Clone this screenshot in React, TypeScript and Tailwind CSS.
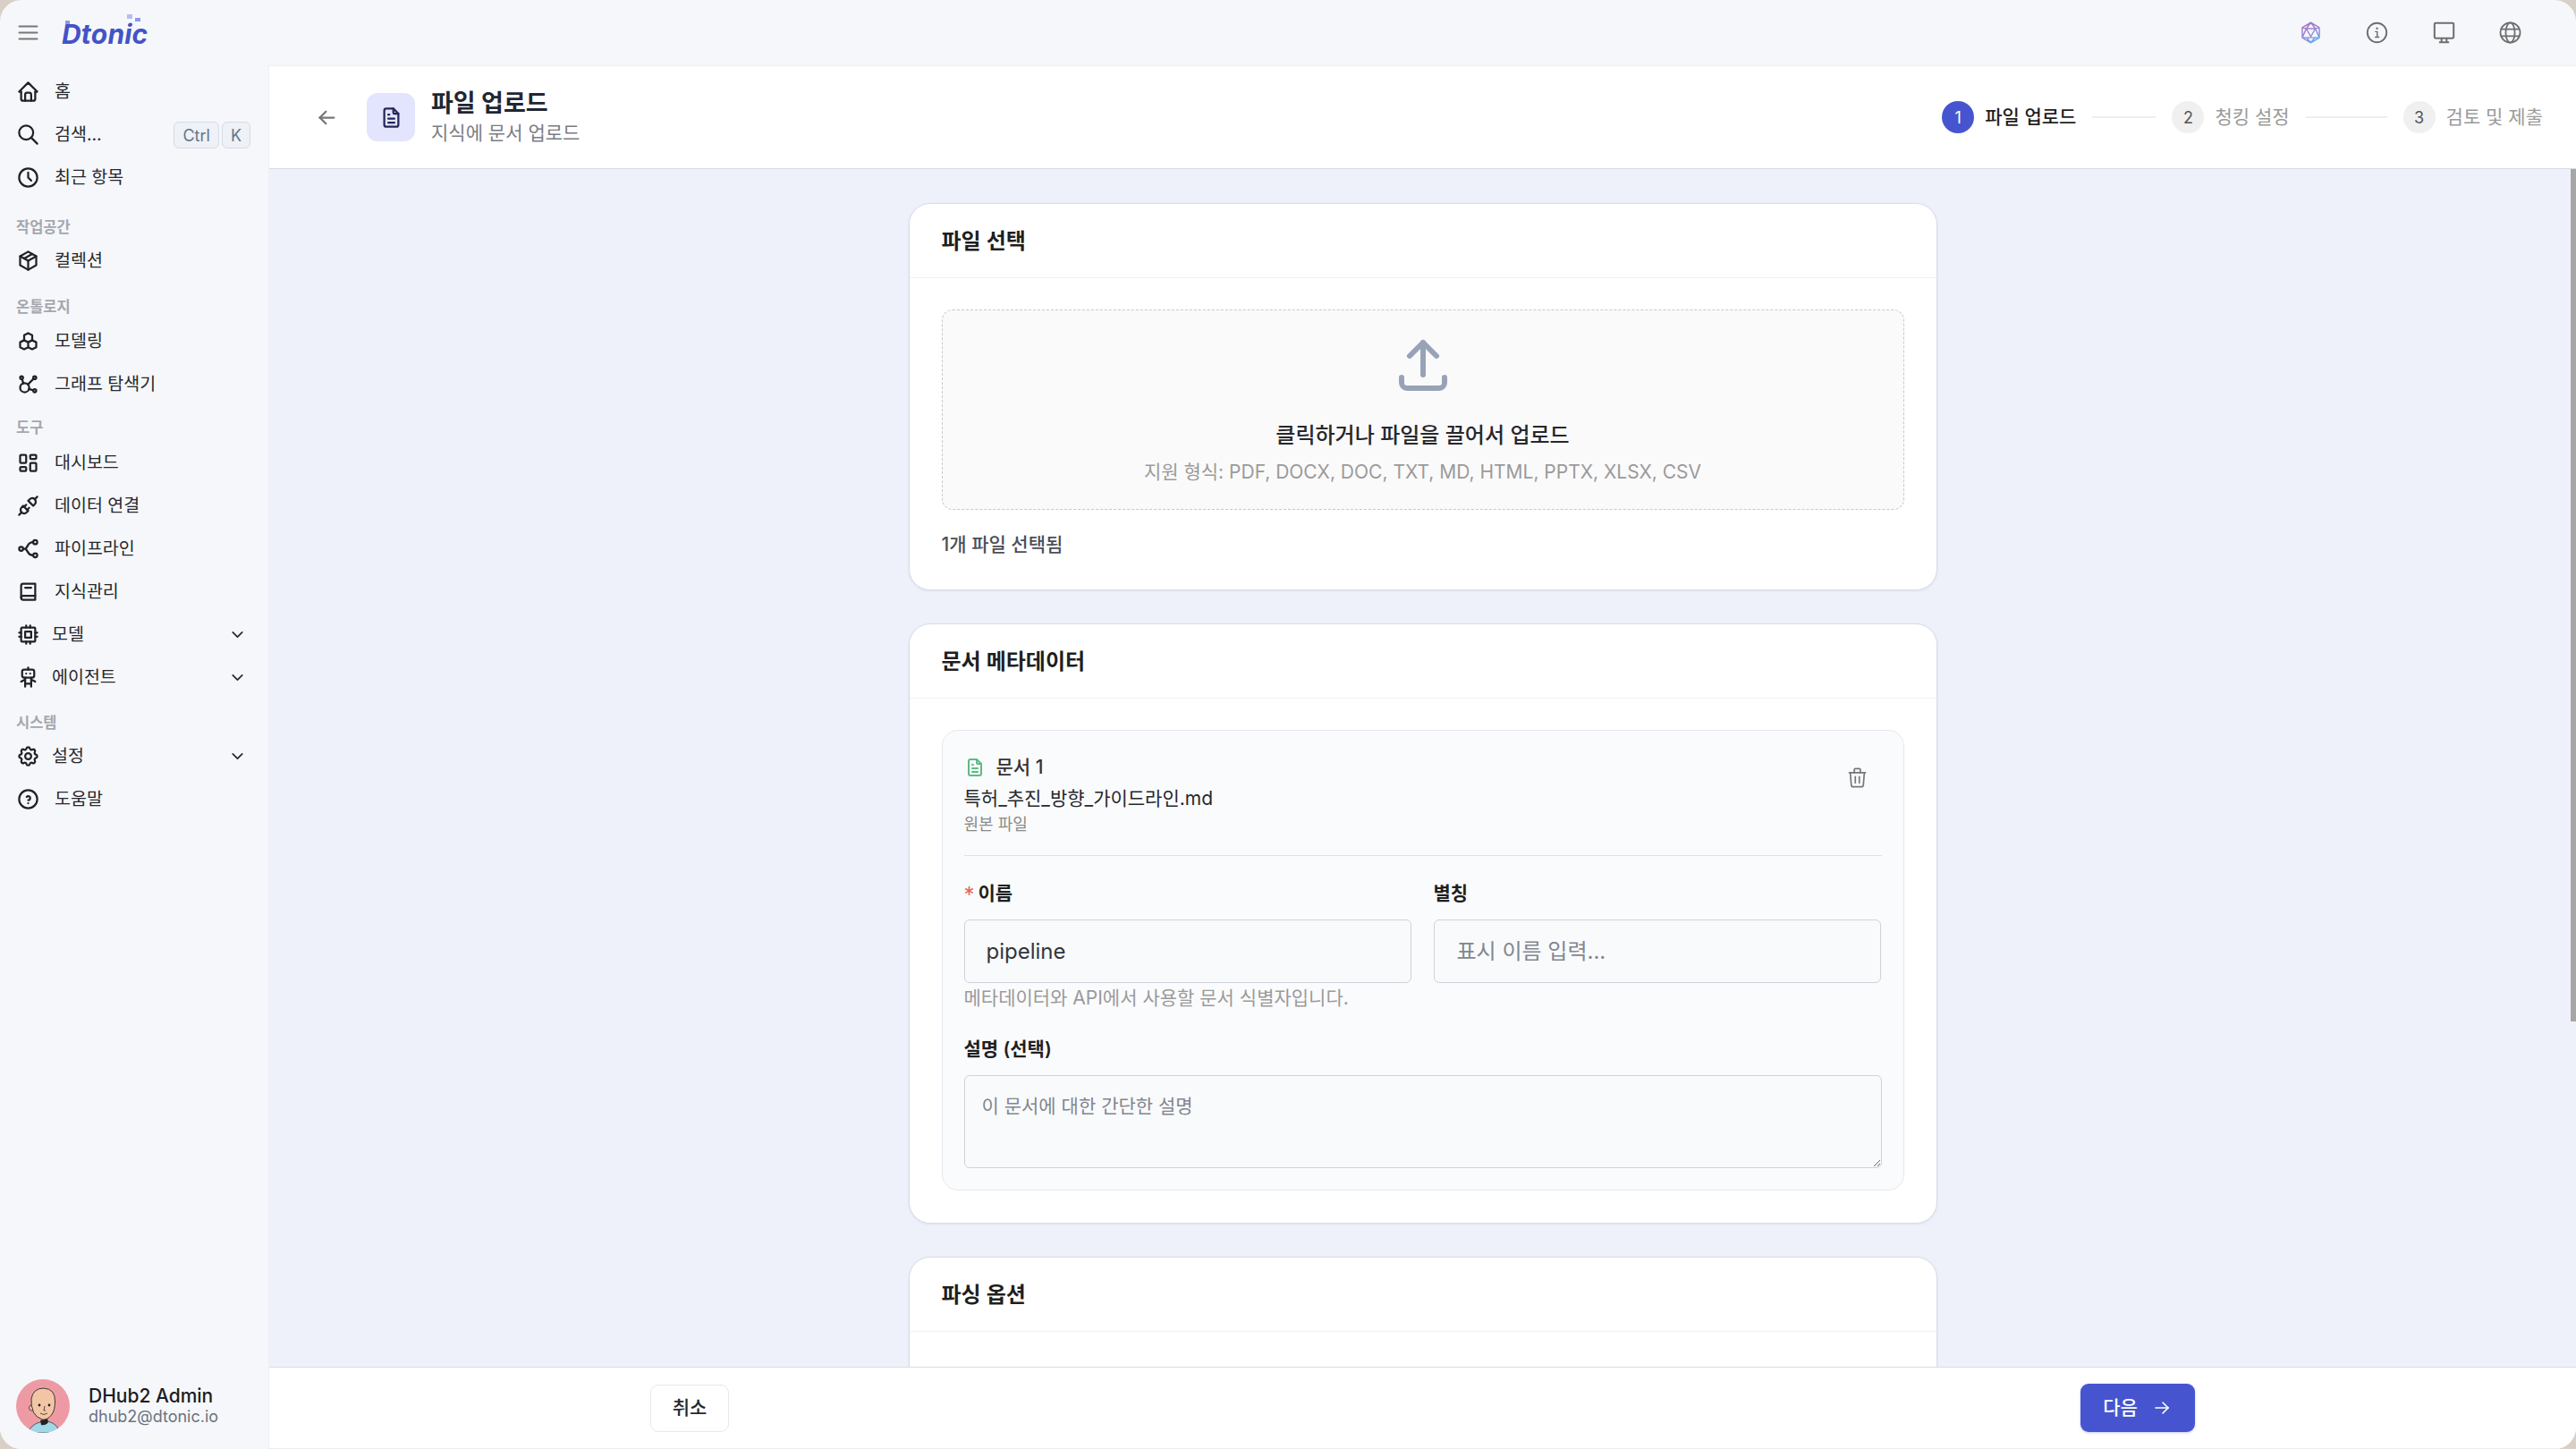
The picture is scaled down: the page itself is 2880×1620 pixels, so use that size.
import React from "react";
import {
  TbAffiliate,
  TbArrowLeft,
  TbArrowRight,
  TbBook2,
  TbChevronDown,
  TbClock,
  TbCpu,
  TbFileText,
  TbHelpCircle,
  TbHexagons,
  TbHome,
  TbLayoutDashboard,
  TbPackage,
  TbPlugConnected,
  TbRobot,
  TbSearch,
  TbSettings,
  TbTrash,
  TbUpload,
} from "react-icons/tb";

const PipelineIcon = ({ size, className }: { size?: number; className?: string }) => (
  <svg width={size} height={size} viewBox="0 0 24 24" fill="none" stroke="currentColor" strokeWidth="2" className={className}>
    <circle cx="5" cy="12" r="2" />
    <circle cx="19" cy="5.500" r="2" />
    <circle cx="19" cy="18.500" r="2" />
    <path d="M7 12h1.500c1.500 0 2-1 3-3 1-2 2.500-3.500 5.500-3.500M8.500 12c1.500 0 2 1 3 3 1 2 2.500 3.500 5.500 3.500" />
  </svg>
);

const NavRow = ({
  icon: Icon,
  label,
  chevron,
  children,
}: {
  icon: React.ComponentType<{ size?: number; className?: string }>;
  label: string;
  chevron?: boolean;
  children?: React.ReactNode;
}) => (
  <div className={`flex h-[48px] items-center pl-[18px] pr-[24px] ${chevron ? "gap-[13px]" : "gap-[16px]"}`}>
    <Icon size={27} className="-mt-[2px] shrink-0 text-[#1f2328]" />
    <span className="text-[19.5px] text-[#26282c]">{label}</span>
    {chevron && <TbChevronDown size={21} className="-mt-[2px] ml-auto text-[#26282c]" />}
    {children}
  </div>
);

const SectionLabel = ({ label, className }: { label: string; className: string }) => (
  <div className={`flex h-[28px] items-center pl-[18px] text-[16.5px] font-semibold text-[#a4a7ae] ${className}`}>{label}</div>
);

const Kbd = ({ children }: { children: React.ReactNode }) => (
  <span className="flex h-[30px] items-center rounded-[6px] border-[1.5px] border-[#d6dce6] bg-[#eef1f6] px-[9px] text-[18px] text-[#64748b]">
    {children}
  </span>
);

const Logo = () => (
  <div className="relative ml-[24px] mt-[3px] flex h-[40px] items-center">
    <span className="text-[30px] leading-none font-bold italic tracking-[0.2px] text-[#4353c8]">Dtonic</span>
    <span className="absolute left-[4px] top-[5px] h-[4px] w-[5px] bg-[#8b9ae8]" />
    <span className="absolute left-[73px] top-[-2px] h-[5px] w-[6px] bg-[#b4bef2]" />
    <span className="absolute left-[82px] top-[2px] h-[4px] w-[6px] bg-[#8b9ae8]" />
  </div>
);

const GemIcon = () => (
  <svg width="27" height="27" viewBox="0 0 24 24" fill="none" strokeWidth="1.300" strokeLinejoin="round">
    <defs>
      <linearGradient id="gem" x1="0" y1="0" x2="0.5" y2="1">
        <stop offset="0" stopColor="#a96fc6" />
        <stop offset="0.6" stopColor="#9a86d6" />
        <stop offset="1" stopColor="#6aa8ec" />
      </linearGradient>
    </defs>
    <path
      stroke="url(#gem)"
      d="M12 2l8.500 5v10L12 22l-8.500-5V7zM12 2L7.500 8h9zM3.500 7l4 1M20.500 7l-4 1M7.500 8L12 16l4.500-8M3.500 17l4-9M20.500 17l-4-9M3.500 17H12h8.500M12 22l-4.500-5.500M12 22l4.500-5.500"
    />
  </svg>
);

const InfoIcon = () => (
  <svg width="27" height="27" viewBox="0 0 24 24" fill="none" stroke="#6f6f6f" strokeWidth="1.700" strokeLinecap="round">
    <circle cx="12" cy="12" r="9.500" />
    <path d="M10.500 11h1.700v5.500M10.300 16.500h3.600" strokeWidth="1.300" />
    <circle cx="12" cy="7.800" r="0.700" fill="#6f6f6f" strokeWidth="0.800" />
  </svg>
);

const MonitorIcon = () => (
  <svg width="27" height="27" viewBox="0 0 24 24" fill="none" stroke="#6f6f6f" strokeWidth="1.800" strokeLinejoin="round">
    <rect x="2.500" y="2.500" width="19" height="15" rx="1" />
    <path d="M9.500 17.500v4M14.500 17.500v4M7 21.500h10" />
  </svg>
);

const GlobeIcon = () => (
  <svg width="27" height="27" viewBox="0 0 24 24" fill="none" stroke="#6f6f6f" strokeWidth="1.600">
    <circle cx="12" cy="12" r="9.800" />
    <ellipse cx="12" cy="12" rx="4.500" ry="9.800" />
    <path d="M2.800 8.500h18.400M2.800 15.500h18.400" />
  </svg>
);

const Avatar = () => (
  <svg width="60" height="60" viewBox="0 0 60 60" className="shrink-0">
    <clipPath id="avatar-clip">
      <circle cx="30" cy="30" r="30" />
    </clipPath>
    <g clipPath="url(#avatar-clip)">
      <rect width="60" height="60" fill="#ee9aa5" />
      <path d="M13 60q4-10 14-12l8-1q11 2 14 13z" fill="#9fd8e6" stroke="#2b2b2b" strokeWidth="0.700" />
      <path d="M27 46l1 5q5 1 8-3l-1-4z" fill="#222" />
      <circle cx="17.500" cy="32" r="3" fill="#f2c6a5" stroke="#2b2b2b" strokeWidth="0.800" />
      <path
        d="M17 22q2-12 14-12q13 1 12.500 15q0 10-4 15q-5 6-10 5q-7-2-10-8q-3-7-2.500-15z"
        fill="#f2c6a5"
        stroke="#2b2b2b"
        strokeWidth="0.900"
      />
      <circle cx="26" cy="29" r="1.400" fill="#222" />
      <circle cx="37" cy="29" r="1.400" fill="#222" />
      <path d="M32 30l-1 5h2M27 38q4 3 8 0" fill="none" stroke="#2b2b2b" strokeWidth="0.800" />
    </g>
  </svg>
);

const Sidebar = () => (
  <aside className="flex w-[301px] shrink-0 flex-col border-r-[1.5px] border-[#eef0f6] bg-[#f6f7fa]">
    <nav className="flex flex-col pt-[6px]">
      <NavRow icon={TbHome} label="홈" />
      <NavRow icon={TbSearch} label="검색...">
        <div className="ml-auto -mr-[4px] flex gap-[3px]">
          <Kbd>Ctrl</Kbd>
          <Kbd>K</Kbd>
        </div>
      </NavRow>
      <NavRow icon={TbClock} label="최근 항목" />
      <SectionLabel label="작업공간" className="mt-[17px]" />
      <NavRow icon={TbPackage} label="컬렉션" />
      <SectionLabel label="온톨로지" className="mt-[13px] mb-[1px]" />
      <NavRow icon={TbHexagons} label="모델링" />
      <NavRow icon={TbAffiliate} label="그래프 탐색기" />
      <SectionLabel label="도구" className="mt-[10px] mb-[2px]" />
      <NavRow icon={TbLayoutDashboard} label="대시보드" />
      <NavRow icon={TbPlugConnected} label="데이터 연결" />
      <NavRow icon={PipelineIcon} label="파이프라인" />
      <NavRow icon={TbBook2} label="지식관리" />
      <NavRow icon={TbCpu} label="모델" chevron />
      <NavRow icon={TbRobot} label="에이전트" chevron />
      <SectionLabel label="시스템" className="mt-[12px]" />
      <NavRow icon={TbSettings} label="설정" chevron />
      <NavRow icon={TbHelpCircle} label="도움말" />
    </nav>
    <div className="mt-auto mb-[18px] flex items-center gap-[21px] pl-[18px]">
      <Avatar />
      <div className="flex flex-col">
        <span className="text-[21px] leading-[24px] font-medium text-[#1a1d24]">DHub2 Admin</span>
        <span className="text-[18px] leading-[22px] text-[#6b7280]">dhub2@dtonic.io</span>
      </div>
    </div>
  </aside>
);

const Step = ({ n, label, active }: { n: number; label: string; active?: boolean }) => (
  <div className="flex items-center gap-[12px]">
    <span
      className={`flex h-[36px] w-[36px] items-center justify-center rounded-full text-[18px] ${
        active ? "bg-[#4655cf] text-white" : "bg-[#f0f0f0] text-[#555]"
      }`}
    >
      {n}
    </span>
    <span className={`text-[21px] ${active ? "font-medium text-[#1f1f1f]" : "text-[#9a9a9a]"}`}>{label}</span>
  </div>
);

const PageHeader = () => (
  <header className="flex h-[116px] shrink-0 items-center border-y-[1.5px] border-t-[#eeeff3] border-b-[#d9dce6] bg-white pl-[51px] pr-[37px]">
    <TbArrowLeft size={27} className="text-[#777]" />
    <div className="ml-[31px] flex h-[54px] w-[54px] items-center justify-center rounded-[12px] bg-[#e2e5fd]">
      <TbFileText size={27} className="text-[#26265a]" />
    </div>
    <div className="ml-[18px] flex flex-col">
      <span className="text-[27px] leading-[36px] font-bold text-[#1f2733]">파일 업로드</span>
      <span className="text-[21px] leading-[30px] text-[#7a7d85]">지식에 문서 업로드</span>
    </div>
    <div className="ml-auto flex items-center">
      <Step n={1} label="파일 업로드" active />
      <span className="mx-[18px] h-[2px] w-[71px] bg-[#eeeeee]" />
      <Step n={2} label="청킹 설정" />
      <span className="mx-[18px] h-[2px] w-[91px] bg-[#eeeeee]" />
      <Step n={3} label="검토 및 제출" />
    </div>
  </header>
);

const Card = ({ title, className, children }: { title: string; className?: string; children?: React.ReactNode }) => (
  <section
    className={`w-[1150px] shrink-0 rounded-[24px] border-[1.5px] border-[#dadde8] bg-white shadow-[0_1px_3px_rgba(30,40,90,0.08)] ${className ?? ""}`}
  >
    <div className="flex h-[83px] items-center border-b-[1.5px] border-[#f0f1f4] px-[36px] pt-[1px] text-[24px] font-semibold text-[#1f1f1f]">
      {title}
    </div>
    {children}
  </section>
);

const FileCard = () => (
  <Card title="파일 선택" className="h-[433px]">
    <div className="px-[36px] pt-[35px]">
      <div className="flex h-[224px] flex-col items-center rounded-[12px] border-[1.5px] border-dashed border-[#c9c9c9] bg-[#fafafa] pt-[24px]">
        <TbUpload size={72} className="text-[#98a3b8]" />
        <span className="mt-[27px] text-[24px] leading-[34px] font-medium text-[#26282c]">클릭하거나 파일을 끌어서 업로드</span>
        <span className="mt-[8px] text-[21px] leading-[32px] text-[#9a9a9a]">지원 형식: PDF, DOCX, DOC, TXT, MD, HTML, PPTX, XLSX, CSV</span>
      </div>
      <div className="mt-[24px] text-[21px] leading-[30px] font-medium text-[#4b4f58]">1개 파일 선택됨</div>
    </div>
  </Card>
);

const fieldClass =
  "w-full rounded-[6px] border-[1.5px] border-[#cfd2da] bg-[#f9fafc] outline-none placeholder:text-[#82868e]";

const MetadataCard = () => (
  <Card title="문서 메타데이터" className="h-[671px]">
    <div className="px-[36px] pt-[35px]">
      <div className="h-[515px] rounded-[18px] border-[1.5px] border-[#e6e8ee] bg-[#fafbfd] px-[24px] pt-[24px]">
        <div className="flex items-start justify-between border-b-[1.5px] border-[#dfe1e8] pb-[24px]">
          <div className="flex flex-col">
            <div className="flex h-[33px] items-center gap-[12px]">
              <TbFileText size={24} className="text-[#5dbb85]" />
              <span className="text-[21px] font-medium text-[#333]">문서 1</span>
            </div>
            <span className="text-[21px] leading-[38px] text-[#26282c]">특허_추진_방향_가이드라인.md</span>
            <span className="text-[18px] leading-[20px] text-[#8a8a8a]">원본 파일</span>
          </div>
          <TbTrash size={27} strokeWidth={1.5} className="mr-[14px] mt-[15px] text-[#777]" />
        </div>
        <div className="mt-[27px] grid grid-cols-[500px_500px] gap-x-[25px]">
          <div className="flex flex-col">
            <label className="flex h-[30px] items-center gap-[4px] text-[21px] font-semibold text-[#1f1f1f]">
              <span className="mt-[3px] text-[24px] font-normal text-[#e5635a]">*</span>이름
            </label>
            <input readOnly value="pipeline" className={`mt-[14px] h-[71px] px-[24px] text-[24px] text-[#33363c] ${fieldClass}`} />
            <span className="mt-[3px] text-[21px] leading-[28px] text-[#9a9a9a]">메타데이터와 API에서 사용할 문서 식별자입니다.</span>
          </div>
          <div className="flex flex-col">
            <label className="flex h-[30px] items-center text-[21px] font-semibold text-[#1f1f1f]">별칭</label>
            <input readOnly placeholder="표시 이름 입력..." className={`mt-[14px] h-[71px] px-[25px] text-[24px] ${fieldClass}`} />
          </div>
        </div>
        <label className="mt-[28px] flex h-[30px] items-center text-[21px] font-semibold text-[#1f1f1f]">설명 (선택)</label>
        <textarea
          readOnly
          placeholder="이 문서에 대한 간단한 설명"
          className={`mt-[14px] block h-[104px] w-[1025px] px-[19px] py-[19px] text-[21px] leading-[30px] ${fieldClass}`}
        />
      </div>
    </div>
  </Card>
);

const PageFooter = () => (
  <footer className="flex h-[92px] shrink-0 items-center justify-between border-y-[1.5px] border-t-[#d9dce6] border-b-[#ececf0] bg-white px-[426px]">
    <button className="h-[53px] w-[88px] rounded-[9px] border-[1.5px] border-[#e8e8ee] bg-white text-[21px] font-medium text-[#26282c]">
      취소
    </button>
    <button className="flex h-[54px] w-[128px] items-center justify-center gap-[15px] rounded-[9px] bg-[#4655cf] text-[21px] font-medium text-white shadow-[0_1px_3px_rgba(70,85,207,0.3)]">
      다음
      <TbArrowRight size={24} strokeWidth={1.6} />
    </button>
  </footer>
);

const App: React.FC = () => {
  return (
    <div className="h-[1620px] w-[2880px] overflow-hidden bg-[#d8cfc6] font-['Inter','Noto_Sans_CJK_KR',sans-serif]">
      <div className="flex h-full flex-col overflow-hidden rounded-[24px] bg-[#f6f7fa]">
        <div className="flex h-[73px] shrink-0 items-center pl-[18px]">
          <svg width="27" height="27" viewBox="0 0 27 27" fill="none" stroke="#777" strokeWidth="2" strokeLinecap="round">
            <path d="M3.500 6.500h20M3.500 13.500h20M3.500 20.500h20" />
          </svg>
          <Logo />
          <div className="ml-auto mr-[60px] flex items-center gap-[47.500px]">
            <GemIcon />
            <InfoIcon />
            <MonitorIcon />
            <GlobeIcon />
          </div>
        </div>
        <div className="flex min-h-0 flex-1">
          <Sidebar />
          <main className="flex min-w-0 flex-1 flex-col">
            <PageHeader />
            <div className="relative flex min-h-0 flex-1 flex-col items-center gap-[37px] overflow-hidden bg-[#eef1fa] pt-[38px]">
              <FileCard />
              <MetadataCard />
              <Card title="파싱 옵션" className="h-[300px]" />
              <span className="absolute right-0 top-0 h-[953px] w-[6px] bg-[#a6a6a6]" />
            </div>
            <PageFooter />
          </main>
        </div>
      </div>
    </div>
  );
};

export default App;
